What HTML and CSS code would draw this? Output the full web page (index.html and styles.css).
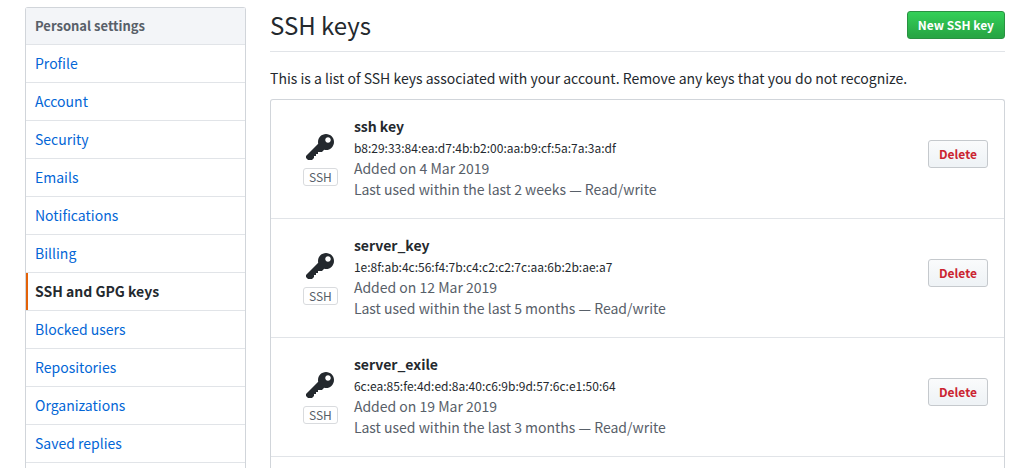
FILE: index.html
```html
<!DOCTYPE html>
<html lang="en">
<head>
<meta charset="utf-8">
<meta name="viewport" content="width=device-width, initial-scale=1">
<title>SSH and GPG keys</title>
<link rel="stylesheet" href="styles.css">
</head>
<body>
<svg class="sprite" aria-hidden="true">
  <symbol id="icon-key" viewBox="0 0 14 16"><path fill-rule="evenodd" d="M12.83 2.17C12.08 1.42 11.14 1.03 10 1c-1.13.03-2.08.42-2.83 1.17S6.04 3.86 6.01 5c0 .3.03.59.09.89L0 12v1l1 1h2l1-1v-1h1v-1h1v-1h2l1.09-1.11c.3.08.59.11.91.11 1.14-.03 2.08-.42 2.83-1.17S13.97 6.14 14 5c-.03-1.14-.42-2.08-1.17-2.83zM11 5.38c-.77 0-1.38-.61-1.38-1.38 0-.77.61-1.38 1.38-1.38.77 0 1.38.61 1.38 1.38 0 .77-.61 1.38-1.38 1.38z"/></symbol>
</svg>
<div class="page">
  <nav class="menu" aria-labelledby="menu-heading">
    <h2 class="menu-heading" id="menu-heading">Personal settings</h2>
    <a class="menu-item" href="#">Profile</a>
    <a class="menu-item" href="#">Account</a>
    <a class="menu-item" href="#">Security</a>
    <a class="menu-item" href="#">Emails</a>
    <a class="menu-item" href="#">Notifications</a>
    <a class="menu-item" href="#">Billing</a>
    <a class="menu-item selected" href="#" aria-current="page">SSH and GPG keys</a>
    <a class="menu-item" href="#">Blocked users</a>
    <a class="menu-item" href="#">Repositories</a>
    <a class="menu-item" href="#">Organizations</a>
    <a class="menu-item" href="#">Saved replies</a>
  </nav>
  <main class="content">
    <header class="subhead">
      <h1 class="subhead-title">SSH keys</h1>
      <button class="btn btn-primary" type="button">New SSH key</button>
    </header>
    <p class="intro">This is a list of SSH keys associated with your account. Remove any keys that you do not recognize.</p>
    <ul class="key-list">
      <li class="key">
        <div class="key-type"><svg class="key-icon" aria-hidden="true"><use href="#icon-key"/></svg><span class="label">SSH</span></div>
        <div class="key-info">
          <strong class="key-name">ssh key</strong>
          <code class="fingerprint">b8:29:33:84:ea:d7:4b:b2:00:aa:b9:cf:5a:7a:3a:df</code>
          <span>Added on 4 Mar 2019</span>
          <span>Last used within the last 2 weeks — Read/write</span>
        </div>
        <button class="btn btn-danger" type="button">Delete</button>
      </li>
      <li class="key">
        <div class="key-type"><svg class="key-icon" aria-hidden="true"><use href="#icon-key"/></svg><span class="label">SSH</span></div>
        <div class="key-info">
          <strong class="key-name">server_key</strong>
          <code class="fingerprint">1e:8f:ab:4c:56:f4:7b:c4:c2:c2:7c:aa:6b:2b:ae:a7</code>
          <span>Added on 12 Mar 2019</span>
          <span>Last used within the last 5 months — Read/write</span>
        </div>
        <button class="btn btn-danger" type="button">Delete</button>
      </li>
      <li class="key">
        <div class="key-type"><svg class="key-icon" aria-hidden="true"><use href="#icon-key"/></svg><span class="label">SSH</span></div>
        <div class="key-info">
          <strong class="key-name">server_exile</strong>
          <code class="fingerprint">6c:ea:85:fe:4d:ed:8a:40:c6:9b:9d:57:6c:e1:50:64</code>
          <span>Added on 19 Mar 2019</span>
          <span>Last used within the last 3 months — Read/write</span>
        </div>
        <button class="btn btn-danger" type="button">Delete</button>
      </li>
    </ul>
  </main>
</div>
</body>
</html>
```
FILE: styles.css
```css
* { box-sizing: border-box; }

html { overflow: hidden; }

body {
  margin: 0;
  background: #fff;
  color: #24292e;
  font-family: "Noto Sans CJK SC", "Noto Sans", sans-serif;
  font-size: 14px;
  line-height: 21px;
}

.sprite { display: none; }

.page {
  display: flex;
  gap: 24px;
  min-height: 100vh;
  padding: 7px 27px 0 25px;
}

.menu {
  flex: 0 0 221px;
  border: 1px solid #d1d5da;
  border-bottom: 0;
  border-radius: 3px 3px 0 0;
}

.menu-heading {
  margin: 0;
  padding: 8px 9px;
  border-bottom: 1px solid #e1e4e8;
  background: #f3f5f8;
  color: #586069;
  font-size: 13px;
  font-weight: 700;
  line-height: 20px;
}

.menu-item {
  display: block;
  padding: 8px 9px;
  border-bottom: 1px solid #e1e4e8;
  color: #0366d6;
  text-decoration: none;
}

.menu-item.selected {
  box-shadow: inset 2px 0 #e36209;
  color: #24292e;
  font-weight: 700;
}

.content {
  display: flex;
  flex: 1;
  flex-direction: column;
  min-width: 0;
}

.subhead {
  display: flex;
  align-items: center;
  justify-content: space-between;
  padding-bottom: 8px;
  border-bottom: 1px solid #e1e4e8;
}

.subhead-title {
  margin: 0;
  font-size: 24px;
  font-weight: 400;
  line-height: 36px;
}

.intro { margin: 16px 0 10px; }

.btn {
  padding: 3px 10px;
  border: 1px solid #c5c9cd;
  border-radius: 3px;
  font: 700 12px/20px "Noto Sans CJK SC", "Noto Sans", sans-serif;
  white-space: nowrap;
}

.btn-primary {
  border-color: #2a9142;
  background: linear-gradient(#34d058, #28a745 90%);
  color: #fff;
}

.btn-danger {
  margin-top: 24px;
  background: linear-gradient(#fafbfc, #eff3f6 90%);
  color: #cb2431;
}

.key-list {
  flex: 1;
  margin: 0;
  padding: 0;
  border: 1px solid #d1d5da;
  border-bottom: 0;
  border-radius: 3px 3px 0 0;
  list-style: none;
}

.key {
  display: flex;
  align-items: flex-start;
  padding: 16px 16px 18px 32px;
  border-bottom: 1px solid #e1e4e8;
}

.key-type {
  display: flex;
  flex: 0 0 34px;
  flex-direction: column;
  align-items: center;
  gap: 4px;
  margin-right: 16px;
  padding-top: 16px;
}

.key-icon {
  width: 28px;
  height: 32px;
  fill: #24292e;
}

.label {
  padding: 0 5px;
  border: 1px solid #d9dbde;
  border-radius: 3px;
  color: #586069;
  font-size: 12px;
  line-height: 16px;
}

.key-info {
  display: flex;
  flex: 1;
  flex-direction: column;
  min-width: 0;
  color: #586069;
}

.key-name { color: #24292e; }

.fingerprint {
  color: #24292e;
  font-family: inherit;
  font-size: 12px;
}
```
